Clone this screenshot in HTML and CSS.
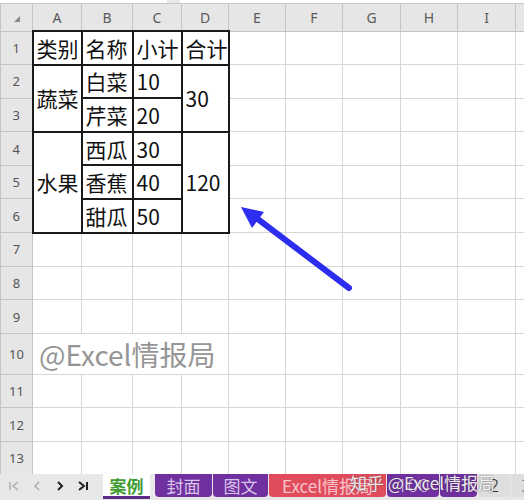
FILE: index.html
```html
<!DOCTYPE html>
<html lang="zh-CN">
<head>
    <meta charset="UTF-8" />
    <title>案例 - 工作表</title>
    <link rel="stylesheet" href="styles.css">
</head>
<body>

<div class="topbar">
    <div class="box name-box"></div>
    <div class="box formula-box"></div>
</div>

<div class="sheet">
    <table class="grid">
        <colgroup>
            <col class="c-head">
            <col class="c-a"><col class="c-b"><col class="c-c"><col class="c-d">
            <col class="c-e"><col class="c-f"><col class="c-g"><col class="c-h"><col class="c-i"><col class="c-j">
        </colgroup>
        <tr class="col-head">
            <th class="corner"><span class="corner-mark"></span></th>
            <th>A</th><th>B</th><th>C</th><th>D</th><th>E</th><th>F</th><th>G</th><th>H</th><th>I</th><th></th>
        </tr>
        <tr>
            <th>1</th>
            <td class="b">类别</td><td class="b">名称</td><td class="b">小计</td><td class="b">合计</td>
            <td></td><td></td><td></td><td></td><td></td><td></td>
        </tr>
        <tr>
            <th>2</th>
            <td class="b" rowspan="2">蔬菜</td><td class="b">白菜</td><td class="b">10</td><td class="b" rowspan="2">30</td>
            <td></td><td></td><td></td><td></td><td></td><td></td>
        </tr>
        <tr>
            <th>3</th>
            <td class="b">芹菜</td><td class="b">20</td>
            <td></td><td></td><td></td><td></td><td></td><td></td>
        </tr>
        <tr>
            <th>4</th>
            <td class="b" rowspan="3">水果</td><td class="b">西瓜</td><td class="b">30</td><td class="b" rowspan="3">120</td>
            <td></td><td></td><td></td><td></td><td></td><td></td>
        </tr>
        <tr>
            <th>5</th>
            <td class="b">香蕉</td><td class="b">40</td>
            <td></td><td></td><td></td><td></td><td></td><td></td>
        </tr>
        <tr>
            <th>6</th>
            <td class="b">甜瓜</td><td class="b">50</td>
            <td></td><td></td><td></td><td></td><td></td><td></td>
        </tr>
        <tr><th>7</th><td></td><td></td><td></td><td></td><td></td><td></td><td></td><td></td><td></td><td></td></tr>
        <tr><th>8</th><td></td><td></td><td></td><td></td><td></td><td></td><td></td><td></td><td></td><td></td></tr>
        <tr><th>9</th><td></td><td></td><td></td><td></td><td></td><td></td><td></td><td></td><td></td><td></td></tr>
        <tr>
            <th>10</th>
            <td class="brand" colspan="4">@Excel情报局</td>
            <td></td><td></td><td></td><td></td><td></td><td></td>
        </tr>
        <tr><th>11</th><td></td><td></td><td></td><td></td><td></td><td></td><td></td><td></td><td></td><td></td></tr>
        <tr><th>12</th><td></td><td></td><td></td><td></td><td></td><td></td><td></td><td></td><td></td><td></td></tr>
        <tr><th>13</th><td></td><td></td><td></td><td></td><td></td><td></td><td></td><td></td><td></td><td></td></tr>
        <tr><th></th><td></td><td></td><td></td><td></td><td></td><td></td><td></td><td></td><td></td><td></td></tr>
    </table>
</div>

<div class="tabbar">
    <div class="tab-nav">
        <svg class="nav-btn dim" viewBox="0 0 12 12"><path d="M2 2v8M10 2L5 6l5 4"/></svg>
        <svg class="nav-btn dim" viewBox="0 0 12 12"><path d="M8 2L4 6l4 4"/></svg>
        <svg class="nav-btn" viewBox="0 0 12 12"><path d="M4 2l4 4-4 4"/></svg>
        <svg class="nav-btn" viewBox="0 0 12 12"><path d="M2 2l5 4-5 4M10 2v8"/></svg>
    </div>
    <div class="tab active">案例</div>
    <div class="tab purple w-57">封面</div>
    <div class="tab purple w-55">图文</div>
    <div class="tab red">Excel情报局</div>
    <div class="tab purple num w-52">100</div>
    <div class="tab purple num w-37">1</div>
    <div class="tab plain num">2</div>
    <div class="tab plain num">3</div>
</div>

<!-- pointer drawn over the grid -->
<svg class="arrow" viewBox="0 0 524 500">
    <line x1="349" y1="288" x2="255" y2="217" />
    <polygon points="241,207 264,212 252,228" />
</svg>

<div class="stamp">知乎 @Excel情报局</div>

</body>
</html>
```

FILE: styles.css
```css
body {
  margin: 0;
  width: 524px;
  height: 500px;
  overflow: hidden;
  background-color: #e8e8e8;
  font-family: "Noto Sans", "Noto Sans CJK SC", sans-serif;
}

.topbar {
  display: flex;
  gap: 13px;
  height: 3px;
  border-bottom: 1px solid #c8c8c8;
  background-color: #e8e8e8;
}

.box {
  background-color: white;
}

.name-box {
  width: 167px;
}

.formula-box {
  flex: 1;
}

.sheet {
  height: 470px;
  overflow: hidden;
  background-color: white;
}

.grid {
  border-collapse: collapse;
  table-layout: fixed;
  width: 563px;
}

.c-head { width: 32px; }
.c-a { width: 49px; }
.c-b { width: 51px; }
.c-c { width: 49px; }
.c-d { width: 47px; }
.c-e { width: 57px; }
.c-f { width: 57px; }
.c-g { width: 58px; }
.c-h { width: 57px; }
.c-i { width: 58px; }
.c-j { width: 48px; }

.grid tr {
  height: 33.6px;
}

.grid tr.col-head {
  height: 27px;
}

.grid th {
  background-color: #e6e6e6;
  color: #555;
  font-size: 13px;
  font-weight: normal;
  border: 1px solid #c4c4c4;
  padding: 0;
}

.col-head th {
  font-size: 14px;
  color: #5a5a5a;
  border-top: none;
}

.corner {
  position: relative;
}

.corner-mark {
  position: absolute;
  left: 13px;
  top: 12px;
  border-left: 6px solid transparent;
  border-bottom: 6px solid #888;
}

.grid td {
  border: 1px solid #d6d6d6;
  padding: 0 0 0 3px;
  font-family: "Noto Sans CJK SC", sans-serif;
  font-size: 21px;
  color: #111;
  white-space: nowrap;
  overflow: hidden;
}

.grid td.b {
  border: 2px solid #1a1a1a;
}

.grid td.brand {
  font-size: 28px;
  color: #959595;
  padding-left: 6px;
  overflow: visible;
}

.tabbar {
  display: flex;
  align-items: flex-start;
  height: 26px;
  background-color: #e8e8e8;
  font-family: "Noto Sans CJK SC", sans-serif;
}

.tab-nav {
  display: flex;
  flex-shrink: 0;
  gap: 11px;
  align-items: center;
  width: 95px;
  height: 24px;
  padding-left: 8px;
}

.nav-btn {
  width: 12px;
  height: 12px;
  fill: none;
  stroke: #222;
  stroke-width: 2;
}

.nav-btn.dim {
  stroke: #aaa;
  stroke-width: 1.4;
}

.tab {
  flex-shrink: 0;
  height: 23px;
  line-height: 23px;
  text-align: center;
  font-size: 17px;
  white-space: nowrap;
  border-radius: 0 0 4px 4px;
  margin-right: 1px;
}

.tab.num {
  font-family: "Noto Sans", sans-serif;
  font-size: 19px;
  line-height: 22px;
  font-weight: 300;
}

.tab.active {
  width: 47px;
  height: 22px;
  background-color: white;
  color: #3f9c33;
  font-weight: bold;
  border-bottom: 3px solid #5c2a86;
  border-radius: 0;
  margin-right: 5px;
}

.tab.purple {
  background-color: #7030a0;
  color: #d8c4ea;
}

.w-57 { width: 57px; }
.w-55 { width: 55px; }
.w-52 { width: 52px; }
.w-37 { width: 37px; }

.tab.red {
  width: 117px;
  background-color: #e14c5d;
  color: #f8c4cb;
}

.tab.plain {
  width: 32px;
  background-color: #dedede;
  color: #333;
}

.arrow {
  position: absolute;
  left: 0;
  top: 0;
  width: 524px;
  height: 500px;
  pointer-events: none;
}

.arrow line {
  stroke: #2d2df0;
  stroke-width: 6;
  stroke-linecap: round;
}

.arrow polygon {
  fill: #2d2df0;
}

.stamp {
  position: absolute;
  left: 350px;
  top: 470px;
  font-family: "Noto Sans CJK SC", sans-serif;
  font-size: 17px;
  color: rgba(255, 255, 255, 0.9);
  text-shadow: 0 0 2px rgba(60, 60, 60, 0.8);
  white-space: nowrap;
}
```
